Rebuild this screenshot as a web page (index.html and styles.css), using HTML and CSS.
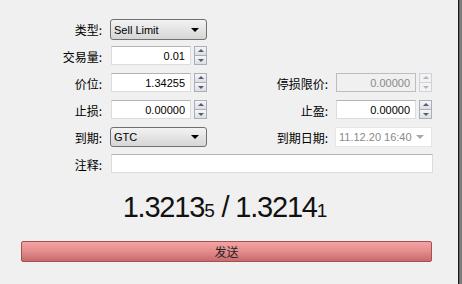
FILE: index.html
```html
<!DOCTYPE html>
<html lang="zh">
<head>
  <meta charset="UTF-8">
  <title>Order</title>
  <link rel="stylesheet" href="styles.css">
</head>
<body>
  <div class="window">
    <div class="order">
      <!-- order fields -->
      <div class="form">
        <label class="lbl">类型:</label>
        <div class="select"><span>Sell Limit</span><i class="arrow"></i></div>

        <label class="lbl">交易量:</label>
        <div class="spin">
          <input class="field" type="text" value="0.01">
          <div class="spin-btns"><b class="up"></b><b class="down"></b></div>
        </div>

        <label class="lbl">价位:</label>
        <div class="spin">
          <input class="field" type="text" value="1.34255">
          <div class="spin-btns"><b class="up"></b><b class="down"></b></div>
        </div>
        <label class="lbl lbl-r">停损限价:</label>
        <div class="spin disabled">
          <input class="field" type="text" value="0.00000" disabled>
          <div class="spin-btns"><b class="up"></b><b class="down"></b></div>
        </div>

        <label class="lbl">止损:</label>
        <div class="spin">
          <input class="field" type="text" value="0.00000">
          <div class="spin-btns"><b class="up"></b><b class="down"></b></div>
        </div>
        <label class="lbl lbl-r">止盈:</label>
        <div class="spin">
          <input class="field" type="text" value="0.00000">
          <div class="spin-btns"><b class="up"></b><b class="down"></b></div>
        </div>

        <label class="lbl">到期:</label>
        <div class="select"><span>GTC</span><i class="arrow"></i></div>
        <label class="lbl lbl-r">到期日期:</label>
        <div class="datetime"><span>11.12.20 16:40</span><i class="arrow"></i></div>

        <label class="lbl">注释:</label>
        <input class="field comment" type="text" value="">
      </div>

      <div class="quote">1.3213<small>5</small> / 1.3214<small>1</small></div>

      <button class="send">发送</button>
    </div>
    <div class="edge"></div>
  </div>
</body>
</html>
```

FILE: styles.css
```css
html, body {
  margin: 0;
  padding: 0;
  background: #f0f0f0;
}

body {
  font-family: "Liberation Sans", Arial, sans-serif;
  font-size: 11px;
  color: #000;
}

.window {
  display: flex;
  width: 462px;
  height: 284px;
  overflow: hidden;
}

.order {
  width: 458px;
  padding-top: 19px;
  box-sizing: border-box;
}

.edge {
  width: 4px;
  background: linear-gradient(to right, #1c1c1c 0, #1c1c1c 1px, #5a5a5a 1px, #8a8a8a 3px, #6a6a6a 4px);
}

/* form grid */
.form {
  display: grid;
  grid-template-columns: 110px 97px 128px 97px;
  grid-auto-rows: 20px;
  row-gap: 7px;
}

.form > :first-child,
.form > :nth-child(2) {
  height: 21px;
}

.lbl {
  grid-column: 1;
  display: flex;
  align-items: center;
  justify-content: flex-end;
  padding-right: 8px;
  font-family: "Noto Sans CJK SC", sans-serif;
  font-size: 12px;
  color: #000;
}

.lbl-r {
  grid-column: 3;
  padding-right: 7px;
}

.field {
  box-sizing: border-box;
  width: 100%;
  height: 19px;
  margin: 0;
  padding: 0 5px 0 3px;
  border: 1px solid #dcdcdc;
  border-top-color: #b4b4b4;
  background: #fff;
  font-family: "Liberation Sans", Arial, sans-serif;
  font-size: 11px;
  text-align: right;
  color: #000;
  outline: none;
}

.field:disabled {
  background: #f0f0f0;
  border-color: #bdbdbd;
  color: #8a8a8a;
}

.comment {
  grid-column: 2 / 5;
  text-align: left;
  margin-left: 1px;
}

.select {
  display: flex;
  align-items: center;
  justify-content: space-between;
  box-sizing: border-box;
  padding: 0 7px 0 3px;
  border: 1px solid #707070;
  border-radius: 3px;
  background: linear-gradient(#f3f3f3, #e4e4e4 50%, #d6d6d6);
}

.arrow {
  width: 0;
  height: 0;
  border-left: 4px solid transparent;
  border-right: 4px solid transparent;
  border-top: 4px solid #000;
}

.datetime {
  display: flex;
  align-items: center;
  justify-content: space-between;
  box-sizing: border-box;
  padding: 0 7px 0 3px;
  border: 1px solid #e6e6e6;
  background: #fff;
  color: #8a8a8a;
}

.datetime .arrow {
  border-top-color: #a8a8a8;
}

/* spinner */
.spin {
  display: flex;
  gap: 3px;
}

.spin .field {
  flex: 1;
  width: 80px;
  margin-left: 1px;
}

.spin-btns {
  display: flex;
  flex-direction: column;
  width: 14px;
  height: 19px;
}

.spin-btns b {
  flex: 1;
  position: relative;
  box-sizing: border-box;
  border: 1px solid #a7afbc;
  background: linear-gradient(#f6f6f6, #dedede);
}

.spin-btns b.down {
  border-top: none;
}

.spin-btns b::after {
  content: "";
  position: absolute;
  left: 3px;
  top: 2px;
  border-left: 3px solid transparent;
  border-right: 3px solid transparent;
}

.spin-btns .up::after {
  border-bottom: 3px solid #4d5f7c;
}

.spin-btns .down::after {
  top: 3px;
  border-top: 3px solid #4d5f7c;
}

.disabled .spin-btns b {
  border-color: #cfd3d9;
  background: #f3f3f3;
}

.disabled .spin-btns .up::after {
  border-bottom-color: #b0b6c0;
}

.disabled .spin-btns .down::after {
  border-top-color: #b0b6c0;
}

/* price line */
.quote {
  margin: 17px 0 0 0;
  width: 450px;
  text-align: center;
  font-family: "Liberation Sans", Arial, sans-serif;
  font-size: 29px;
  letter-spacing: -1.2px;
  line-height: 32px;
  color: #111;
}

.quote small {
  font-size: 19px;
  letter-spacing: 0;
}

.send {
  display: block;
  box-sizing: border-box;
  width: 411px;
  height: 21px;
  margin: 14px 0 0 21px;
  padding: 0;
  border: 1px solid #a84f52;
  border-radius: 2px;
  background: linear-gradient(#f4a3a3, #e38c8c 50%, #c86a6d);
  font-family: "Noto Sans CJK SC", sans-serif;
  font-size: 12px;
  color: #222;
}
```
